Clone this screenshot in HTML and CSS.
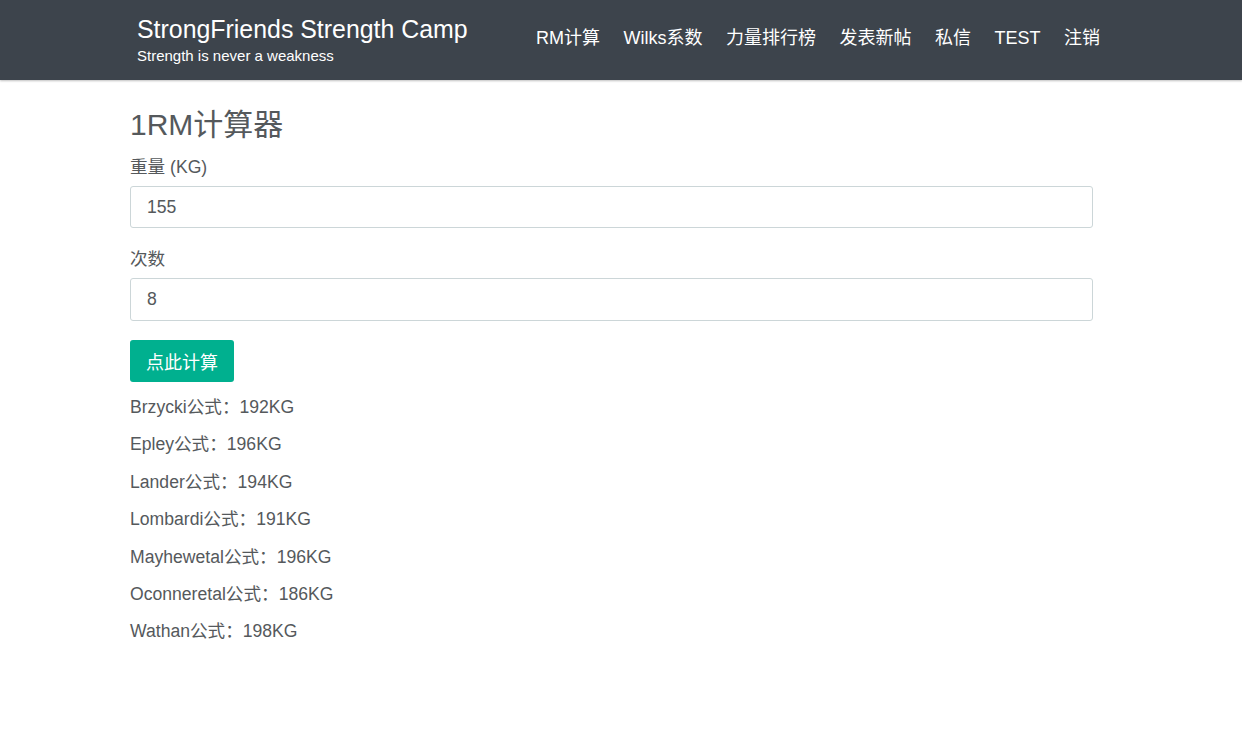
FILE: index.html
```html
<!DOCTYPE html>
<html lang="zh">
<head>
<meta charset="utf-8">
<title>1RM计算器</title>
<link rel="stylesheet" href="styles.css">
</head>
<body>
<header class="navbar">
  <div class="navbar-inner">
    <div class="brand">
      <div class="brand-title">StrongFriends Strength Camp</div>
      <div class="brand-sub">Strength is never a weakness</div>
    </div>
    <nav class="nav">
      <a href="#">RM计算</a>
      <a href="#">Wilks系数</a>
      <a href="#">力量排行榜</a>
      <a href="#">发表新帖</a>
      <a href="#">私信</a>
      <a href="#">TEST</a>
      <a href="#">注销</a>
    </nav>
  </div>
</header>
<main class="content">
  <h1 class="title">1RM计算器</h1>
  <div class="field">
    <label class="label">重量 (KG)</label>
    <input class="input" type="text" value="155">
  </div>
  <div class="field">
    <label class="label">次数</label>
    <input class="input" type="text" value="8">
  </div>
  <button class="btn">点此计算</button>
  <div class="results">
    <p>Brzycki公式：192KG</p>
    <p>Epley公式：196KG</p>
    <p>Lander公式：194KG</p>
    <p>Lombardi公式：191KG</p>
    <p>Mayhewetal公式：196KG</p>
    <p>Oconneretal公式：186KG</p>
    <p>Wathan公式：198KG</p>
  </div>
</main>
</body>
</html>
```
FILE: styles.css
```css
* { box-sizing: border-box; }
body {
  margin: 0;
  font-family: "Liberation Sans", Arial, "Noto Sans CJK SC", sans-serif;
  color: #55595c;
  background: #fff;
}
.navbar {
  background: #3d444c;
  height: 80px;
  box-shadow: 0 1px 2px rgba(0,0,0,0.25);
}
.navbar-inner {
  display: flex;
  align-items: flex-start;
  justify-content: space-between;
  padding: 0 142px 0 137px;
}
.brand { padding-top: 14px; color: #fff; }
.brand-title { font-size: 24.9px; line-height: 30px; }
.brand-sub { font-size: 15px; line-height: 18px; margin-top: 3px; }
.nav { display: flex; gap: 23.5px; padding-top: 26px; }
.nav a {
  color: #fff;
  text-decoration: none;
  font-size: 18px;
  line-height: 24px;
}
.content {
  padding: 0 149px 0 130px;
}
.title {
  font-weight: 400;
  font-size: 30px;
  line-height: 36px;
  margin: 27px 0 0;
  color: #55595c;
}
.label {
  display: block;
  font-size: 17.6px;
  line-height: 26px;
  margin: 11px 0 6px;
}
.field + .field .label { margin-top: 18px; }
.input {
  display: block;
  width: 100%;
  height: 42px;
  border: 1px solid #ccd6d8;
  border-radius: 3px;
  padding: 0 16px;
  font-family: inherit;
  font-size: 17.6px;
  color: #55595c;
  outline: none;
}
.field + .field .input { height: 43px; }
.btn {
  display: block;
  margin-top: 19px;
  height: 42px;
  padding: 0 16px;
  background: #00b08f;
  border: none;
  border-radius: 3px;
  color: #fff;
  font-family: inherit;
  font-size: 18px;
}
.results { margin-top: 12px; }
.results p {
  margin: 0 0 11.4px;
  font-size: 17.6px;
  line-height: 26px;
}
```
